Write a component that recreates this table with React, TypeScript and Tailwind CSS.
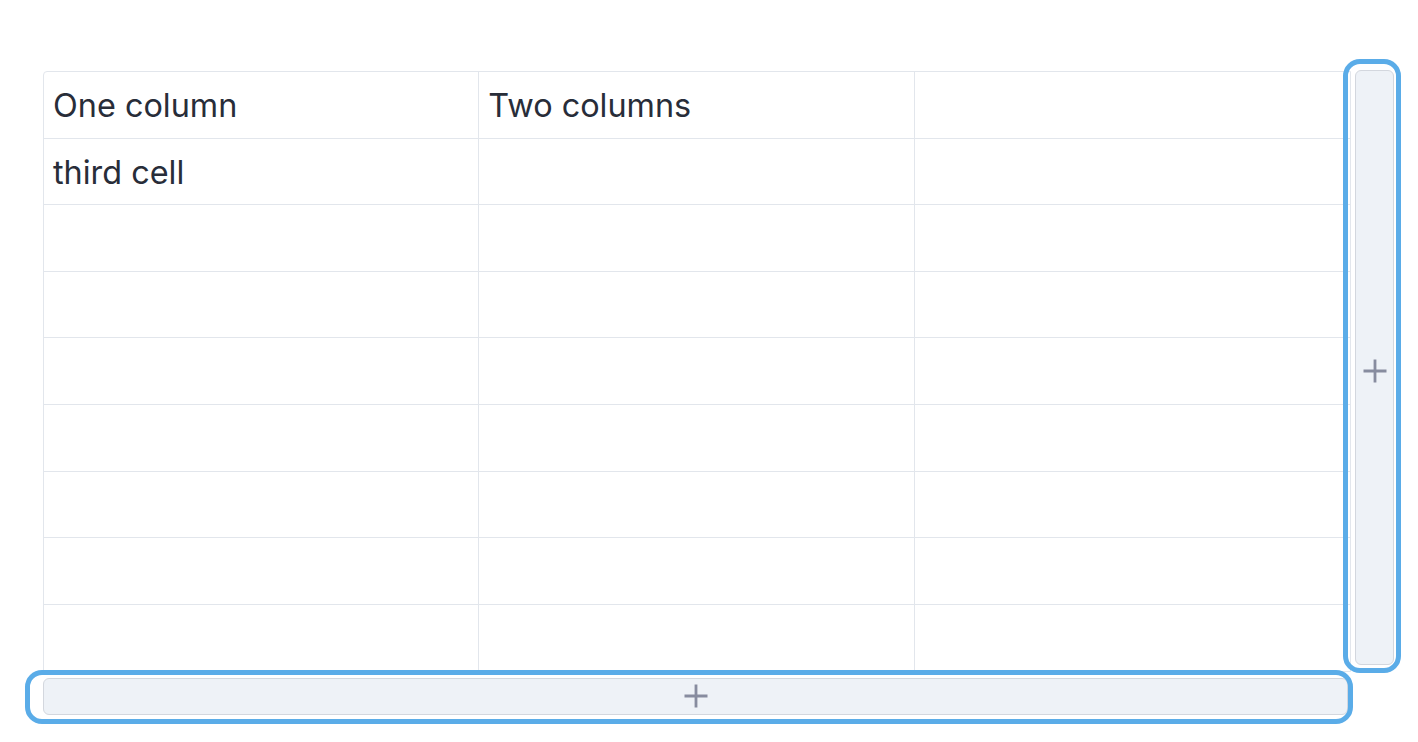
import React from 'react';
import clsx from 'clsx';

const ROWS = 9;
const COLS = 3;

const cellText: Record<string, string> = {
    '0-0': 'One column',
    '0-1': 'Two columns',
    '1-0': 'third cell',
};

const PlusIcon = () => (
    <svg width="24" height="24" viewBox="0 0 24 24" fill="none" stroke="#878c9f" strokeWidth="2.8">
        <path d="M12 0.5v23M0.5 12h23" />
    </svg>
);

const App = () => {
    return (
        <div className="h-[742px] w-[1418px] bg-white pl-[43px] pt-[71px] font-['Inter','Liberation_Sans',sans-serif] text-[#282d39]">
            <div className="flex items-start gap-[4px]">
                {/* table */}
                <div className="grid w-[1308px] grid-cols-3 rounded-tl-[4px] border border-[#e2e6ec]">
                    {Array.from({ length: ROWS }).map((_, r) =>
                        Array.from({ length: COLS }).map((_, c) => (
                            <div
                                key={`${r}-${c}`}
                                className={clsx(
                                    'flex h-[66.6px] items-center px-[9px] pt-[3px] text-[32.4px] leading-none',
                                    c < COLS - 1 && 'border-r border-[#e2e6ec]',
                                    r < ROWS - 1 && 'border-b border-[#e2e6ec]'
                                )}
                            >
                                {cellText[`${r}-${c}`]}
                            </div>
                        ))
                    )}
                </div>

                {/* add column */}
                <div className="relative -mt-[1px] h-[595px] w-[39px]">
                    <div className="pointer-events-none absolute -bottom-[8px] -left-[12px] -right-[7px] -top-[11px] rounded-[17px] border-[5px] border-[#5aace8]" />
                    <button className="flex h-full w-full items-center justify-center rounded-[6px] border border-[#d3d7de] bg-[#eef2f7] pt-[6px]">
                        <PlusIcon />
                    </button>
                </div>
            </div>

            {/* add row */}
            <div className="relative mt-[6px] h-[37px] w-[1305px]">
                <div className="pointer-events-none absolute -bottom-[9px] -left-[18px] -right-[5px] -top-[8px] rounded-[17px] border-[5px] border-[#5aace8]" />
                <button className="flex h-full w-full items-center justify-center rounded-[6px] border border-[#d3d7de] bg-[#eef2f7] pb-[1px]">
                    <PlusIcon />
                </button>
            </div>
        </div>
    );
};

export default App;
